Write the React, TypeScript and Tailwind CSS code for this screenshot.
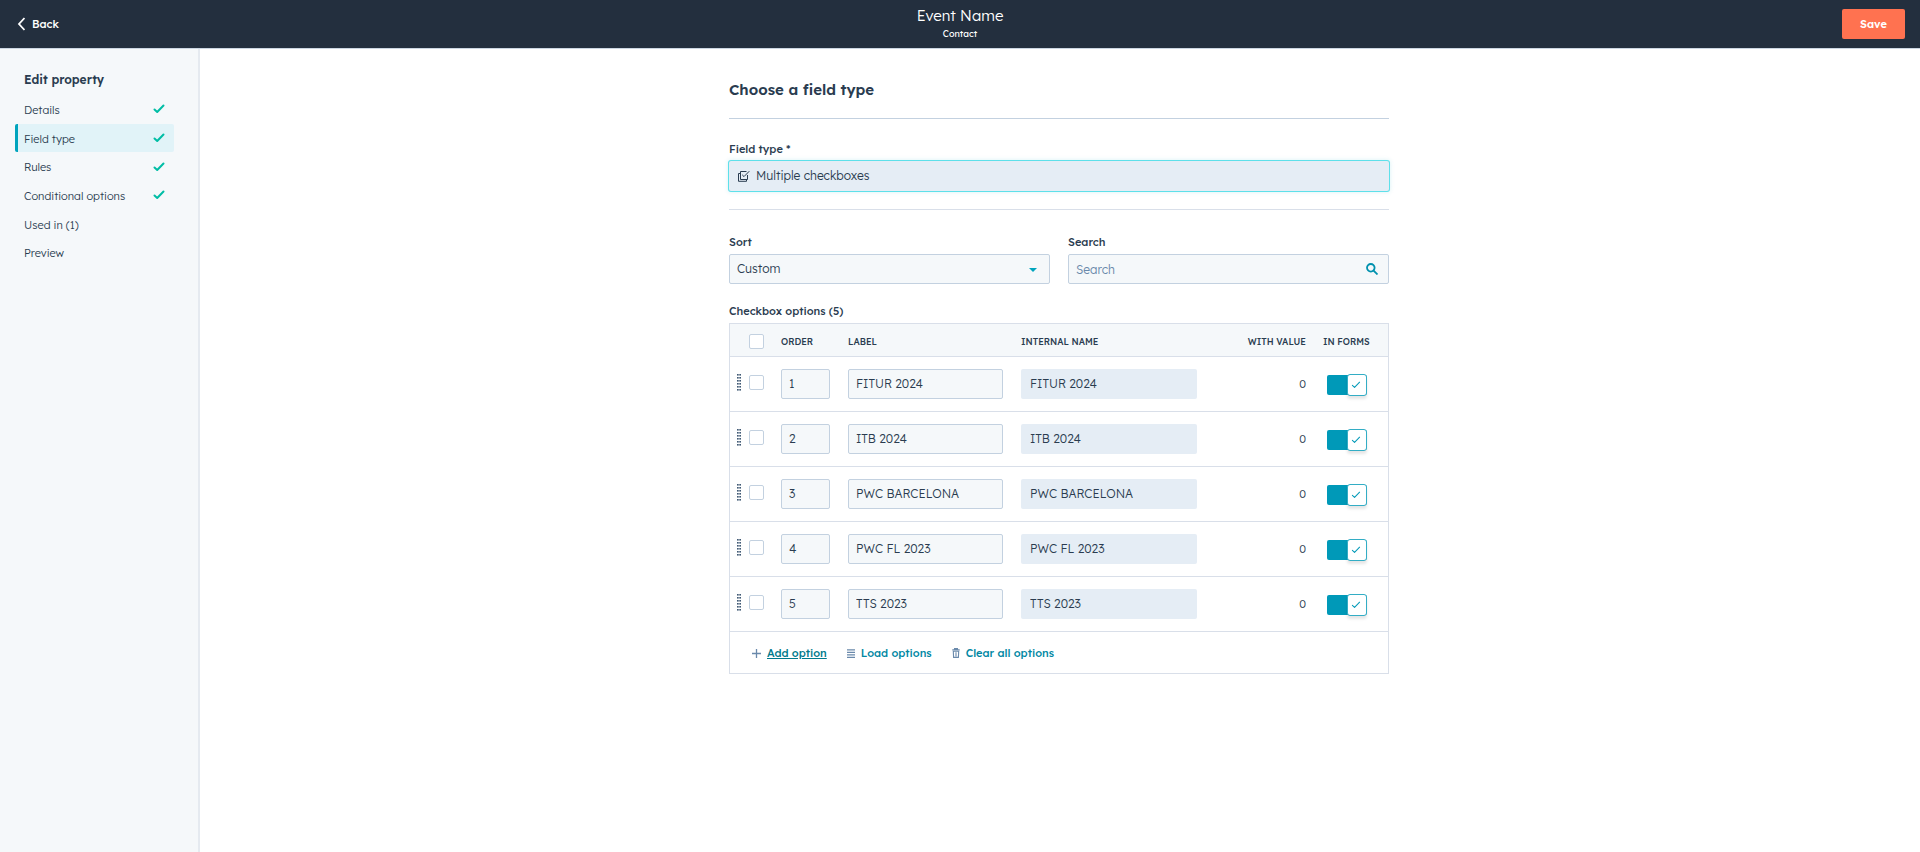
import { useState } from 'react';

interface Step {
  name: string;
  done: boolean;
}

interface Option {
  order: number;
  label: string;
  withValue: number;
  inForms: boolean;
}

const steps: Step[] = [
  { name: 'Details', done: true },
  { name: 'Field type', done: true },
  { name: 'Rules', done: true },
  { name: 'Conditional options', done: true },
  { name: 'Used in (1)', done: false },
  { name: 'Preview', done: false },
];

const initialOptions: Option[] = [
  { order: 1, label: 'FITUR 2024', withValue: 0, inForms: true },
  { order: 2, label: 'ITB 2024', withValue: 0, inForms: true },
  { order: 3, label: 'PWC BARCELONA', withValue: 0, inForms: true },
  { order: 4, label: 'PWC FL 2023', withValue: 0, inForms: true },
  { order: 5, label: 'TTS 2023', withValue: 0, inForms: true },
];

const inputClass =
  'block h-[30px] w-full rounded-[2px] border border-[#c3d1e0] bg-[#f5f8fa] px-[7px] text-[12px] leading-4 font-light outline-none';
const labelClass = 'block text-[11px] leading-4 font-medium';
const checkboxClass =
  'block size-[15px] appearance-none rounded-[2px] border border-[#c3d1e0] bg-white checked:border-[#00a4bd] checked:bg-[#00a4bd]';

const CheckIcon = ({ className }: { className: string }) => (
  <svg viewBox="0 0 12 10" fill="none" stroke="currentColor" strokeLinecap="round" strokeLinejoin="round" className={className}>
    <path d="M1.5 5.5 L4.2 8 L10.5 1.5" />
  </svg>
);

const MultiCheckboxIcon = () => (
  <svg viewBox="0 0 12 12" fill="none" stroke="currentColor" className="size-3">
    <path d="M8.5 1.5 H2.5 V9.5 H9.5 V5" />
    <path d="M2.5 3.5 H0.5 V11.3 H8.5 V9.5" />
    <path d="M4.2 4.8 L6 6.6 L11.3 1.2" />
  </svg>
);

const DragHandle = () => (
  <svg viewBox="0 0 4 17" fill="#425b76" className="h-[17px] w-1">
    {[0, 3, 6, 9, 12, 15].map((y) => (
      <g key={y}>
        <rect x="0" y={y} width="1.7" height="1.6" />
        <rect x="2.3" y={y} width="1.7" height="1.6" />
      </g>
    ))}
  </svg>
);

const App = () => {
  const [options, setOptions] = useState<Option[]>(initialOptions);
  const [search, setSearch] = useState('');

  const updateOption = (order: number, changes: Partial<Option>) => {
    setOptions(options.map((o) => (o.order === order ? { ...o, ...changes } : o)));
  };

  const visible = options.filter((o) => o.label.toLowerCase().includes(search.toLowerCase()));

  return (
    <div className="flex min-h-screen flex-col bg-white font-['Lexend_Deca','Lexend',Inter,sans-serif] text-[#2a3c50]">
      {/* Header */}
      <header className="grid h-[49px] grid-cols-3 items-center border-b border-[#cbd6e2] bg-[#232f3e] px-[15px] text-white">
        <button className="flex items-center gap-[7px] justify-self-start text-[11px] font-medium">
          <svg viewBox="0 0 10 14" fill="none" stroke="currentColor" strokeWidth="1.8" className="h-[14px] w-[10px]">
            <path d="M9.5 1 L4 7 L9.5 13" />
          </svg>
          Back
        </button>
        <div className="text-center">
          <h1 className="text-[15px] leading-5 font-light">Event Name</h1>
          <p className="text-[9px] leading-4">Contact</p>
        </div>
        <button className="h-[30px] w-[63px] justify-self-end rounded-[2px] bg-[#ff7250] text-[11px] font-semibold">
          Save
        </button>
      </header>

      <div className="flex flex-1">
        {/* Steps */}
        <nav className="w-[200px] shrink-0 border-r-2 border-[#e5eaf0] bg-[#f5f8fa] pt-[21px] pr-6 pl-[15px]">
          <h2 className="mb-[5px] pl-[9px] text-[12px] leading-5 font-semibold">Edit property</h2>
          <ul className="grid h-[172px] grid-rows-6">
            {steps.map((step) => (
              <li key={step.name}>
                <a
                  href="#"
                  className={`flex h-full items-center justify-between rounded-[2px] border-l-3 pt-[2px] pr-[9px] pl-[6px] text-[11px] font-light ${
                    step.name === 'Field type' ? 'border-[#00a4bd] bg-[#e1f3f8]' : 'border-transparent'
                  }`}
                >
                  {step.name}
                  {step.done && <CheckIcon className="mb-[2px] h-[10px] w-3 stroke-2 text-[#00bda5]" />}
                </a>
              </li>
            ))}
          </ul>
        </nav>

        {/* Editor */}
        <main className="flex-1 pr-[2px]">
          <div className="mx-auto max-w-[660px] pt-[29px]">
            <h2 className="text-[15px] leading-6 font-semibold">Choose a field type</h2>
            <hr className="mt-4 border-[#c3d1e0]" />

            <label htmlFor="field-type" className={`${labelClass} mt-[22px]`}>
              Field type *
            </label>
            <button
              id="field-type"
              className="mt-1 flex h-[30px] w-full items-center gap-[6px] rounded-[2px] bg-[#e5edf5] px-[9px] text-[12px] font-light shadow-[0_0_4px_1px_#7fd1de4d] ring-1 ring-[#5ee0ea]"
            >
              <MultiCheckboxIcon />
              Multiple checkboxes
            </button>
            <hr className="mt-[18px] border-[#d9dfe9]" />

            <div className="mt-6 grid grid-cols-2 gap-[18px]">
              <div>
                <label htmlFor="sort" className={labelClass}>
                  Sort
                </label>
                <div className="relative mt-1">
                  <select id="sort" className={`${inputClass} appearance-none`}>
                    <option>Custom</option>
                    <option>Alphabetical</option>
                  </select>
                  <svg viewBox="0 0 8 4" fill="#00a4bd" className="pointer-events-none absolute top-[14px] right-[13px] h-1 w-2">
                    <path d="M0 0 H8 L4 4 Z" />
                  </svg>
                </div>
              </div>
              <div>
                <label htmlFor="search" className={labelClass}>
                  Search
                </label>
                <div className="relative mt-1">
                  <input
                    id="search"
                    value={search}
                    onChange={(e) => setSearch(e.target.value)}
                    placeholder="Search"
                    className={`${inputClass} placeholder:text-[#6a89ab]`}
                  />
                  <svg viewBox="0 0 12 12" fill="none" stroke="#0091ae" strokeWidth="1.8" className="pointer-events-none absolute top-[9px] right-[11px] size-3">
                    <circle cx="4.8" cy="4.8" r="3.8" />
                    <path d="M7.6 7.6 L11.5 11.5" />
                  </svg>
                </div>
              </div>
            </div>

            <h3 className={`${labelClass} mt-[19px]`}>Checkbox options ({options.length})</h3>
            <div className="mt-1 border border-[#d9dfe9]">
              <table className="w-full table-fixed border-collapse">
                <colgroup>
                  <col className="w-[51px]" />
                  <col className="w-[67px]" />
                  <col className="w-[173px]" />
                  <col className="w-[194px]" />
                  <col />
                  <col className="w-[82px]" />
                </colgroup>
                <thead className="bg-[#f5f8fa] text-[9px] uppercase">
                  <tr className="h-8 border-b border-[#d9dfe9]">
                    <th className="pt-[3px] pl-[19px]">
                      <input type="checkbox" aria-label="Select all" className={checkboxClass} />
                    </th>
                    <th className="pt-[3px] text-left font-medium">Order</th>
                    <th className="pt-[3px] text-left font-medium">Label</th>
                    <th className="pt-[3px] text-left font-medium">Internal name</th>
                    <th className="pt-[3px] text-right font-medium">With value</th>
                    <th className="pt-[3px] pl-[17px] text-left font-medium">In forms</th>
                  </tr>
                </thead>
                <tbody>
                  {visible.map((option) => (
                    <tr key={option.order} className="h-[55px] border-b border-[#d9dfe9]">
                      <td className="pb-[3px] pl-[7px]">
                        <div className="flex items-center gap-2">
                          <DragHandle />
                          <input type="checkbox" aria-label={`Select ${option.label}`} className={checkboxClass} />
                        </div>
                      </td>
                      <td className="pr-[18px]">
                        <input aria-label="Order" defaultValue={option.order} className={inputClass} />
                      </td>
                      <td className="pr-[18px]">
                        <input
                          aria-label="Label"
                          value={option.label}
                          onChange={(e) => updateOption(option.order, { label: e.target.value })}
                          className={inputClass}
                        />
                      </td>
                      <td className="pr-[18px]">
                        <input
                          aria-label="Internal name"
                          readOnly
                          value={option.label}
                          className="block h-[30px] w-full rounded-[2px] bg-[#e5edf5] px-[9px] text-[12px] leading-4 font-light outline-none"
                        />
                      </td>
                      <td className="pt-[2px] text-right text-[11px] font-light">{option.withValue}</td>
                      <td className="pt-[2px] pl-[21px]">
                        <button
                          role="switch"
                          aria-checked={option.inForms}
                          aria-label="In forms"
                          onClick={() => updateOption(option.order, { inForms: !option.inForms })}
                          className={`flex h-5 w-10 items-center rounded-[2px] ${
                            option.inForms ? 'justify-end bg-[#0099b8]' : 'justify-start bg-[#cbd6e2]'
                          }`}
                        >
                          <span className="flex h-[22px] w-5 shrink-0 items-center justify-center rounded-[3px] border border-[#33adc5] bg-white pr-[2px] shadow-[0_3px_3px_#0000001a]">
                            {option.inForms && <CheckIcon className="h-2 w-[10px] stroke-[1.3] text-[#0099b8]" />}
                          </span>
                        </button>
                      </td>
                    </tr>
                  ))}
                </tbody>
              </table>

              <div className="flex h-[41px] items-center gap-5 pt-[2px] pl-[22px] text-[11px] font-medium text-[#0087a3]">
                <button className="flex items-center gap-[6px]">
                  <svg viewBox="0 0 9 9" stroke="#6a89ab" strokeWidth="1.3" className="size-[9px]">
                    <path d="M4.5 0 V9 M0 4.5 H9" />
                  </svg>
                  <span className="text-[#007a8c] underline">Add option</span>
                </button>
                <button className="flex items-center gap-[6px]">
                  <svg viewBox="0 0 8 9" stroke="#6a89ab" strokeWidth="1.2" className="h-[9px] w-2">
                    <path d="M0 0.8 H8 M0 3.3 H8 M0 5.8 H8 M0 8.3 H8" />
                  </svg>
                  Load options
                </button>
                <button className="flex items-center gap-[6px]">
                  <svg viewBox="0 0 8 10" fill="none" stroke="#6a89ab" className="h-[10px] w-2">
                    <path d="M0.3 1.8 H7.7 M2.6 1.6 V0.6 H5.4 V1.6" strokeWidth="1.2" />
                    <path d="M1.3 3.2 H6.7 L6.4 9.4 H1.6 Z M4 4.2 V8.4" strokeWidth="1.1" />
                  </svg>
                  Clear all options
                </button>
              </div>
            </div>
          </div>
        </main>
      </div>
    </div>
  );
};

export default App;
